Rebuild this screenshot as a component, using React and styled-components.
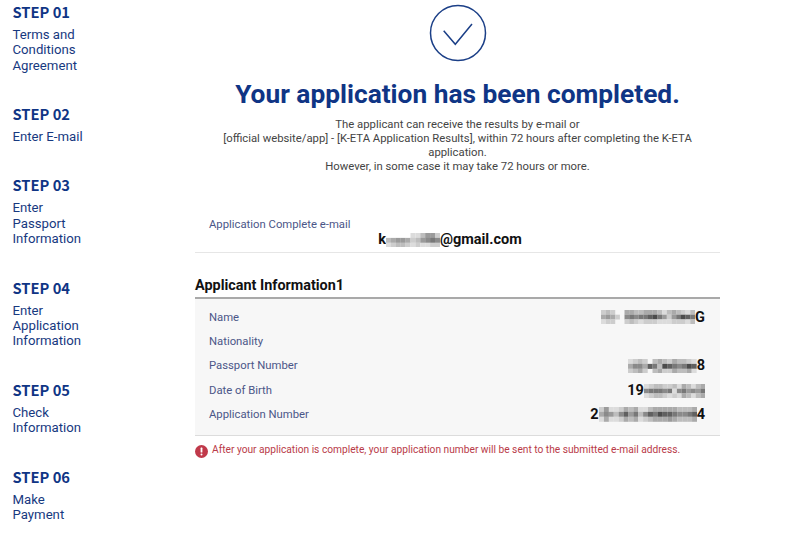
import React from 'react';
import styled, { createGlobalStyle } from 'styled-components';

const GlobalStyle = createGlobalStyle`
  html, body {
    margin: 0;
    padding: 0;
    background: #fff;
    font-family: Roboto, 'Liberation Sans', sans-serif;
  }
`;

const Page = styled.div`
  width: 800px;
  height: 536px;
  overflow: hidden;
  display: grid;
  grid-template-columns: 195px 525px;
`;

const Sidebar = styled.ul`
  list-style: none;
  margin: 0;
  padding: 1.7px 0 0 12.5px;
  display: flex;
  flex-direction: column;
  gap: 31px;
`;

const StepTitle = styled.div`
  font-family: 'Noto Sans CJK KR', 'Noto Sans', sans-serif;
  font-size: 14.7px;
  font-weight: 700;
  line-height: 20px;
  color: #0f3585;
  margin-bottom: 5px;
`;

const StepText = styled.div`
  font-size: 13.2px;
  line-height: 15.4px;
  color: #17397f;
  white-space: pre-line;
`;

const Main = styled.main`
  padding-top: 4px;
`;

const CheckIcon = styled.svg`
  display: block;
  margin: 0 auto;
  width: 58px;
  height: 58px;
`;

const Heading = styled.h1`
  margin: 14px 0 0;
  font-size: 26.3px;
  font-weight: 700;
  line-height: 36px;
  color: #0f3585;
  text-align: center;
`;

const Intro = styled.p`
  margin: 6px auto 0;
  font-size: 11.3px;
  line-height: 14px;
  color: #444;
  text-align: center;
  white-space: pre-line;
`;

const EmailBlock = styled.section`
  margin-top: 44px;
  padding-bottom: 4px;
  border-bottom: 1px solid #e6e6e6;
`;

const EmailLabel = styled.div`
  padding-left: 14px;
  font-size: 11.3px;
  line-height: 14px;
  color: #4b5688;
`;

const EmailValue = styled.div`
  display: flex;
  justify-content: center;
  align-items: center;
  padding-right: 15px;
  font-size: 14.5px;
  font-weight: 700;
  line-height: 16px;
  color: #111;
`;

const SectionTitle = styled.h2`
  margin: 24px 0 0;
  font-size: 14.4px;
  font-weight: 700;
  line-height: 18px;
  color: #111;
`;

const InfoPanel = styled.div`
  margin-top: 2px;
  padding: 6px 15px 8px 14px;
  background: #f7f7f7;
  border-top: 2px solid #a9a9a9;
  border-bottom: 1px solid #dcdcdc;
`;

const InfoRow = styled.div`
  display: flex;
  justify-content: space-between;
  align-items: center;
  height: 24.4px;
`;

const InfoLabel = styled.span`
  font-size: 11.3px;
  color: #4b5688;
`;

const InfoValue = styled.span`
  display: flex;
  align-items: center;
  font-size: 14.5px;
  font-weight: 700;
  color: #111;
`;

const Notice = styled.div`
  display: flex;
  align-items: flex-start;
  gap: 4px;
  margin-top: 7px;
  font-size: 10.2px;
  line-height: 13px;
  color: #b93a48;
`;

const NoticeIcon = styled.svg`
  flex: none;
  width: 13px;
  height: 13px;
  margin-top: 2px;
`;

const MosaicSvg = styled.svg`
  display: block;
  flex: none;
  filter: blur(0.3px);
  margin-top: ${({ $shift }) => $shift || 0}px;
`;

const steps = [
  ['STEP 01', 'Terms and\nConditions\nAgreement'],
  ['STEP 02', 'Enter E-mail'],
  ['STEP 03', 'Enter\nPassport\nInformation'],
  ['STEP 04', 'Enter\nApplication\nInformation'],
  ['STEP 05', 'Check\nInformation'],
  ['STEP 06', 'Make\nPayment'],
];

const shades = ['transparent', '#dcdcdc', '#cdcdcd', '#bdbdbd', '#aaaaaa', '#9a9a9a', '#8a8a8a', '#787878', '#606060', '#4c4c4c'];

// each row is a line of blurred cells, digit = how dark the cell is
function Mosaic({ rows, shift, cell = 4.9 }) {
  const w = rows[0].length * cell;
  const h = rows.length * cell;
  return (
    <MosaicSvg $shift={shift} width={w} height={h} viewBox={`0 0 ${w} ${h}`}>
      {rows.map((row, y) =>
        row.split('').map((c, x) => (
          <rect key={`${x}-${y}`} x={x * cell} y={y * cell} width={cell + 0.1} height={cell + 0.1} fill={shades[+c]} />
        ))
      )}
    </MosaicSvg>
  );
}

const emailBlur = ['00000113552', '34554235676', '12332121122'];
const nameBlur = ['23200443344431343213', '45420676778975257987', '12200232122211122213'];
const passportBlur = ['12320343243321', '46648739876798', '23420342243341'];
const birthBlur = ['1233223143134', '6777671675657', '1233212143134'];
const appBlur = ['25112434113444443334', '46536857368798876678', '14112434123444543334'];

const rows = [
  { label: 'Name', value: <><Mosaic rows={nameBlur} cell={4.7} />G</> },
  { label: 'Nationality', value: null },
  { label: 'Passport Number', value: <><Mosaic rows={passportBlur} />8</> },
  { label: 'Date of Birth', value: <>19<Mosaic rows={birthBlur} shift={2} cell={4.7} /></> },
  { label: 'Application Number', value: <>2<Mosaic rows={appBlur} />4</> },
];

export default function App() {
  return (
    <Page>
      <GlobalStyle />
      <Sidebar>
        {steps.map(([title, text]) => (
          <li key={title}>
            <StepTitle>{title}</StepTitle>
            <StepText>{text}</StepText>
          </li>
        ))}
      </Sidebar>
      <Main>
        <CheckIcon viewBox="0 0 58 58" fill="none" stroke="#1b3f87" strokeWidth="1.5">
          <circle cx="29" cy="29" r="27.5" />
          <path d="M14.7 26.7 L26.3 40.3 L43 20" />
        </CheckIcon>
        <Heading>Your application has been completed.</Heading>
        <Intro>
          {'The applicant can receive the results by e-mail or\n[official website/app] - [K-ETA Application Results], within 72 hours after completing the K-ETA\napplication.\nHowever, in some case it may take 72 hours or more.'}
        </Intro>
        <EmailBlock>
          <EmailLabel>Application Complete e-mail</EmailLabel>
          <EmailValue>
            k<Mosaic rows={emailBlur} />@gmail.com
          </EmailValue>
        </EmailBlock>
        <SectionTitle>Applicant Information1</SectionTitle>
        <InfoPanel>
          {rows.map((row) => (
            <InfoRow key={row.label}>
              <InfoLabel>{row.label}</InfoLabel>
              <InfoValue>{row.value}</InfoValue>
            </InfoRow>
          ))}
        </InfoPanel>
        <Notice>
          <NoticeIcon viewBox="0 0 13 13">
            <circle cx="6.5" cy="6.5" r="6.5" fill="#c0394a" />
            <rect x="5.6" y="2.6" width="1.8" height="5" rx="0.6" fill="#fff" />
            <circle cx="6.5" cy="9.5" r="1" fill="#fff" />
          </NoticeIcon>
          After your application is complete, your application number will be sent to the submitted e-mail address.
        </Notice>
      </Main>
    </Page>
  );
}
